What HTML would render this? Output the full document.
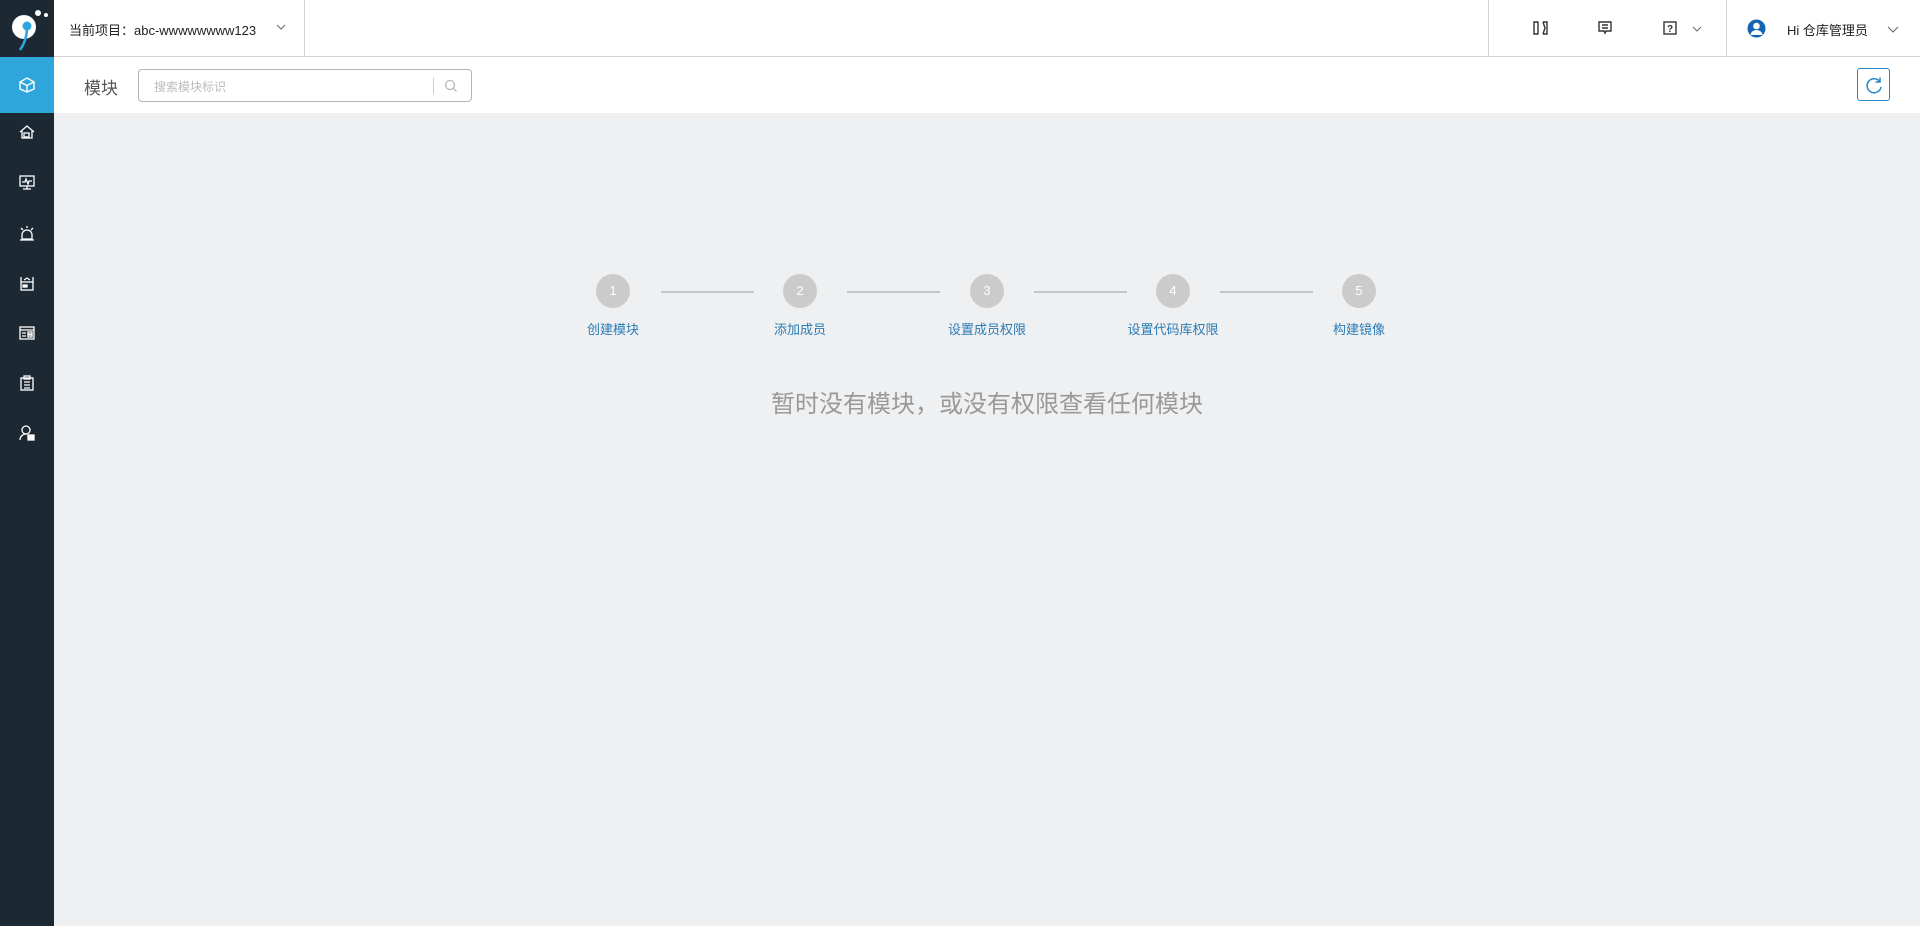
<!DOCTYPE html>
<html><head><meta charset="utf-8"><style>
*{margin:0;padding:0;box-sizing:border-box}
body{width:1920px;height:926px;overflow:hidden;background:#eff0f2;font-family:"Liberation Sans","Noto Sans CJK SC",sans-serif;position:relative}
.side{position:absolute;left:0;top:0;width:54px;height:926px;background:#1c2933}
.active{position:absolute;left:0;top:57px;width:54px;height:56px;background:#2ea6dc}
.ic{position:absolute;left:18px;width:18px;height:18px}
.top{position:absolute;left:54px;top:0;right:0;height:57px;background:#fff;border-bottom:1px solid #d4d4d4}
.bar{position:absolute;left:54px;top:57px;right:0;height:56px;background:#fff}
.abs{position:absolute}
.circ{position:absolute;top:274px;width:34px;height:34px;border-radius:50%;background:#cbcbcb;color:#fff;font-size:13px;line-height:34px;text-align:center}
.line{position:absolute;top:291px;width:93px;height:2px;background:#c4c6cc}
.lab{position:absolute;top:319px;font-size:13px;color:#2a7cb5;width:200px;text-align:center}
</style></head><body>
<div class="side">
<svg class="abs" style="left:0;top:0" width="54" height="57"><circle cx="24" cy="27" r="12" fill="#fff"/><circle cx="27" cy="26" r="4.5" fill="#2ea6dc"/><path d="M27 28 Q27 40 20 50" stroke="#2ea6dc" stroke-width="2.5" fill="none"/><circle cx="38" cy="13" r="3" fill="#fff"/><circle cx="46" cy="15" r="2" fill="#fff"/></svg>
<div class="active"></div>
<svg class="ic" style="top:76px" viewBox="0 0 18 18" fill="none" stroke="#fff" stroke-width="1.4"><path d="M9 2 L16 6 V13 L9 16 L2 13 V6 Z M2 6 L9 9.5 L16 6 M9 9.5 V16"/></svg>
<svg class="ic" style="top:123px" viewBox="0 0 18 18" fill="none" stroke="#fff" stroke-width="1.3"><path d="M2 9 L9 3 L16 9 M4 8 V15 H14 V8"/><rect x="6" y="10" width="5" height="4"/></svg>
<svg class="ic" style="top:173px" viewBox="0 0 18 18" fill="none" stroke="#fff" stroke-width="1.3"><rect x="2" y="3" width="14" height="10"/><path d="M4 9 H7 L8 6 L10 11 L11 8 H14 M9 13 V16 M5 16 H13"/></svg>
<svg class="ic" style="top:224px" viewBox="0 0 18 18" fill="none" stroke="#fff" stroke-width="1.3"><path d="M4 15 V11 A5 5 0 0 1 14 11 V15 Z M2 16 H16 M9 2 V4 M3 4 L5 6 M15 4 L13 6"/></svg>
<svg class="ic" style="top:274px" viewBox="0 0 18 18" fill="none" stroke="#fff" stroke-width="1.3"><rect x="3" y="8" width="12" height="8"/><path d="M3 8 V3 M15 8 V3 M6 6 L9 4 L12 6"/><rect x="5" y="11" width="4" height="2" fill="#fff"/></svg>
<svg class="ic" style="top:324px" viewBox="0 0 18 18" fill="none" stroke="#fff" stroke-width="1.3"><rect x="2" y="3" width="14" height="12"/><path d="M2 6 H16 M4 9 H8 M4 12 H8"/><rect x="10" y="8" width="4" height="2"/><rect x="10" y="11" width="4" height="2"/></svg>
<svg class="ic" style="top:374px" viewBox="0 0 18 18" fill="none" stroke="#fff" stroke-width="1.3"><rect x="3" y="4" width="12" height="12"/><rect x="6" y="2" width="6" height="3"/><path d="M6 8 H12 M6 11 H12 M6 14 H12"/></svg>
<svg class="ic" style="top:424px" viewBox="0 0 18 18" fill="none" stroke="#fff" stroke-width="1.3"><circle cx="8" cy="6" r="4"/><path d="M2 16 A6 6 0 0 1 8 10"/><rect x="10" y="11" width="6" height="5" fill="#fff"/></svg>
</div>
<div class="top">
<div class="abs" style="left:15px;top:20px;font-size:13px;color:#222">当前项目：abc-wwwwwwww123</div>
<svg class="abs" style="left:222px;top:24px" width="10" height="6"><path d="M1 1 L5 5 L9 1" stroke="#666" fill="none"/></svg>
<div class="abs" style="left:250px;top:0;width:1px;height:57px;background:#d4d4d4"></div>
<div class="abs" style="left:1434px;top:0;width:1px;height:57px;background:#d4d4d4"></div>
<div class="abs" style="left:1672px;top:0;width:1px;height:57px;background:#d4d4d4"></div>
<svg class="abs" style="left:1479px;top:21px" width="16" height="14" fill="none" stroke="#333" stroke-width="1.4"><path d="M1 1 V13 H5 V1 Z M10 1 H14 V13 H10 M10 1 L12 7 L10 13"/></svg>
<svg class="abs" style="left:1544px;top:21px" width="14" height="14" fill="none" stroke="#333" stroke-width="1.4"><path d="M1 1 H13 V10 H8 L7 12 L6 10 H1 Z M4 4 H10 M4 7 H10"/></svg>
<svg class="abs" style="left:1609px;top:21px" width="14" height="14" fill="none" stroke="#333" stroke-width="1.4"><rect x="1" y="1" width="12" height="12"/><text x="7" y="11" font-size="10" text-anchor="middle" fill="#333" stroke="none" font-weight="bold" font-family="Liberation Sans">?</text></svg>
<svg class="abs" style="left:1638px;top:26px" width="10" height="6"><path d="M1 1 L5 5 L9 1" stroke="#666" fill="none"/></svg>
<svg class="abs" style="left:1693px;top:19px" width="19" height="19"><circle cx="9.5" cy="9.5" r="9" fill="#1565b0"/><circle cx="9.5" cy="7" r="3.3" fill="#fff"/><path d="M3.5 16 A6 5 0 0 1 15.5 16" fill="#fff"/></svg>
<div class="abs" style="left:1733px;top:20px;font-size:13px;color:#222">Hi 仓库管理员</div>
<svg class="abs" style="left:1833px;top:26px" width="12" height="7"><path d="M1 1 L6 6 L11 1" stroke="#666" fill="none"/></svg>
</div>
<div class="bar">
<div class="abs" style="left:30px;top:17px;font-size:17px;color:#555">模块</div>
<div class="abs" style="left:84px;top:12px;width:334px;height:33px;border:1px solid #b4b4b4;border-radius:4px">
<div class="abs" style="left:15px;top:8px;font-size:12px;color:#bbb">搜索模块标识</div>
<div class="abs" style="left:294px;top:8px;width:1px;height:16px;background:#ccc"></div>
<svg class="abs" style="left:305px;top:9px" width="14" height="14" fill="none" stroke="#bbb" stroke-width="1.3"><circle cx="6" cy="6" r="4.5"/><path d="M9.5 9.5 L12.5 12.5"/></svg>
</div>
<div class="abs" style="left:1803px;top:11px;width:33px;height:33px;border:1px solid #2a86c4;border-radius:3px">
<svg class="abs" style="left:7px;top:7px" width="18" height="18" fill="none" stroke="#2a86c4" stroke-width="1.5"><path d="M15 6 A7 7 0 1 0 16 11"/><path d="M15 1.5 V6 H10.5"/></svg>
</div>
</div>
<div class="circ" style="left:596px">1</div>
<div class="circ" style="left:783px">2</div>
<div class="circ" style="left:970px">3</div>
<div class="circ" style="left:1156px">4</div>
<div class="circ" style="left:1342px">5</div>
<div class="line" style="left:661px"></div>
<div class="line" style="left:847px"></div>
<div class="line" style="left:1034px"></div>
<div class="line" style="left:1220px"></div>
<div class="lab" style="left:513px">创建模块</div>
<div class="lab" style="left:700px">添加成员</div>
<div class="lab" style="left:887px">设置成员权限</div>
<div class="lab" style="left:1073px">设置代码库权限</div>
<div class="lab" style="left:1259px">构建镜像</div>
<div class="abs" style="left:0;width:1974px;top:384px;text-align:center;font-size:24px;color:#999">暂时没有模块，或没有权限查看任何模块</div>
</body></html>
